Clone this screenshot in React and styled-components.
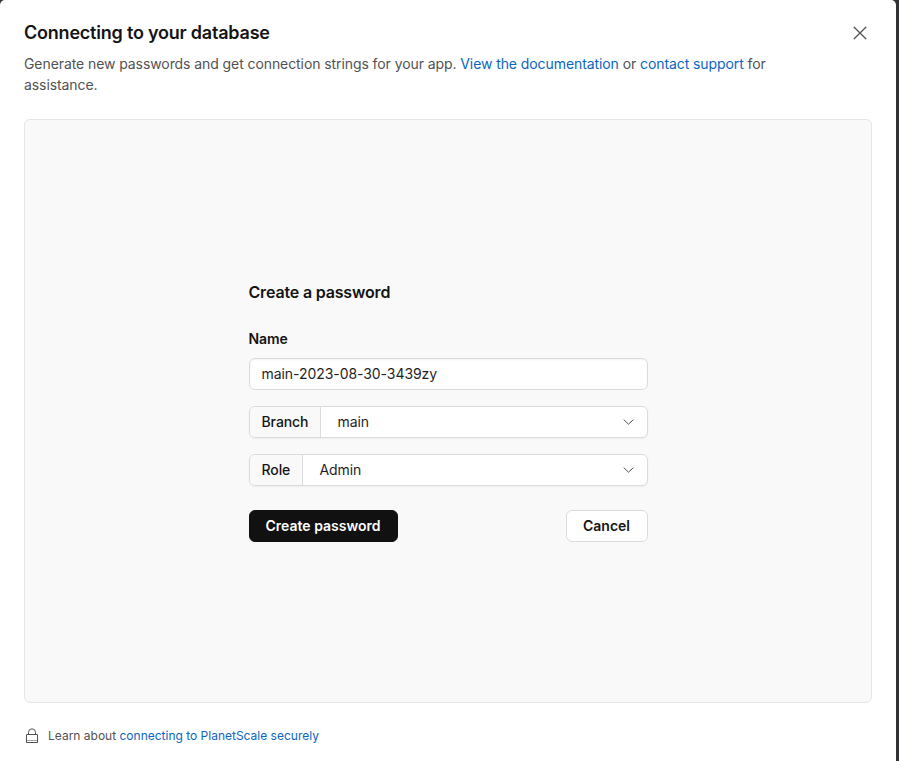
import React from "react";
import styled, { createGlobalStyle } from "styled-components";

const Global = createGlobalStyle`
  *, *::before, *::after { box-sizing: border-box; }
  body { margin: 0; background: #313235; overflow: hidden; }
  h1, h2, p { margin: 0; }
  body, button, input { font-family: Inter, "Liberation Sans", sans-serif; }
`;

const Dialog = styled.main`
  width: 896px;
  height: 761px;
  padding: 21px 24px 0;
  display: flex;
  flex-direction: column;
  background: #fff;
  border-radius: 5px 5px 0 0;
  color: #141414;
`;

const Header = styled.header`
  display: flex;
  justify-content: space-between;
  align-items: flex-start;
  height: 98px;
`;

const Intro = styled.div`
  width: 764px;
`;

const Title = styled.h1`
  font-size: 18px;
  line-height: 24px;
  font-weight: 600;
  letter-spacing: -0.21px;
`;

const Description = styled.p`
  margin-top: 8px;
  font-size: 14px;
  line-height: 21px;
  letter-spacing: -0.084px;
  color: #525252;
`;

const Link = styled.a`
  color: #0b65c2;
  text-decoration: none;
`;

const CloseButton = styled.button`
  display: flex;
  width: 24px;
  height: 24px;
  padding: 5px;
  border: 0;
  background: none;
  color: #525252;
`;

const Panel = styled.section`
  height: 584px;
  flex: none;
  display: flex;
  justify-content: center;
  padding-top: 161px;
  border: 1px solid #e6e6e6;
  border-radius: 6px;
  background: #f9f9f9;
`;

const Form = styled.form`
  width: 399px;
  display: flex;
  flex-direction: column;
`;

const FormTitle = styled.h2`
  font-size: 16px;
  line-height: 22px;
  font-weight: 600;
  letter-spacing: -0.17px;
`;

const Label = styled.label`
  margin: 26px 0 9px;
  font-size: 14px;
  line-height: 20px;
  font-weight: 600;
  letter-spacing: -0.08px;
`;

const TextInput = styled.input`
  width: 100%;
  height: 32px;
  padding: 0 12px 2px;
  border: 1px solid #dbdbdb;
  border-radius: 6px;
  outline: 0;
  background: #fff;
  box-shadow: inset 0 1px 2px rgba(0, 0, 0, 0.05);
  color: #1f1f1f;
  font-size: 14px;
  letter-spacing: -0.06px;
`;

const Select = styled.div`
  display: flex;
  height: 32px;
  margin-top: 16px;
  overflow: hidden;
  border: 1px solid #dbdbdb;
  border-radius: 6px;
  background: #fff;
  box-shadow: 0 1px 2px rgba(0, 0, 0, 0.05);
  font-size: 14px;
  line-height: 30px;
`;

const SelectLabel = styled.span`
  width: ${({ $width }) => $width}px;
  padding-left: 12px;
  border-right: 1px solid #dbdbdb;
  background: #f9f9f9;
  font-weight: 500;
  letter-spacing: -0.084px;
`;

const SelectValue = styled.span`
  flex: 1;
  display: flex;
  align-items: center;
  justify-content: space-between;
  padding: 0 12px 0 17px;
  color: #1f1f1f;
  letter-spacing: -0.084px;
`;

const Actions = styled.div`
  display: flex;
  justify-content: space-between;
  margin-top: 24px;
`;

const Button = styled.button`
  width: ${({ $width }) => $width}px;
  height: 32px;
  padding: 0 0 2px;
  border: 1px solid ${({ $primary }) => ($primary ? "#111" : "#dbdbdb")};
  border-radius: 6px;
  background: ${({ $primary }) => ($primary ? "#111" : "#fff")};
  color: ${({ $primary }) => ($primary ? "#fff" : "#141414")};
  font-size: 14px;
  font-weight: 600;
`;

const Footer = styled.footer`
  display: flex;
  align-items: center;
  gap: 8px;
  height: 20px;
  margin-top: 23px;
  color: #525252;
  font-size: 12px;
  line-height: 20px;
  letter-spacing: 0;
`;

const Chevron = () => (
  <svg width="14" height="14" viewBox="0 0 14 14" fill="none" stroke="#525252" strokeLinecap="round">
    <path d="M3 4.9 7.5 9.2 12 4.9" />
  </svg>
);

const Cross = () => (
  <svg width="14" height="14" viewBox="0 0 14 14" fill="none" stroke="currentColor" strokeWidth="1.3" strokeLinecap="round">
    <path d="m1.2 1.2 11.6 11.6M12.8 1.2 1.2 12.8" />
  </svg>
);

const Lock = () => (
  <svg width="16" height="16" viewBox="0 0 16 16" fill="none" stroke="#525252">
    <path d="M4.5 6.5V4.3a3.5 3.5 0 0 1 7 0v2.2" />
    <path d="M2.5 6.5h11v8h-11z" />
    <path d="M3 12.5h10" stroke="#a8a8a8" />
  </svg>
);

function SelectField({ label, labelWidth, value }) {
  return (
    <Select>
      <SelectLabel $width={labelWidth}>{label}</SelectLabel>
      <SelectValue>
        {value}
        <Chevron />
      </SelectValue>
    </Select>
  );
}

export default function App() {
  return (
    <>
      <Global />
      <Dialog>
        <Header>
          <Intro>
            <Title>Connecting to your database</Title>
            <Description>
              Generate new passwords and get connection strings for your app. <Link>View the documentation</Link> or{" "}
              <Link>contact support</Link> for assistance.
            </Description>
          </Intro>
          <CloseButton aria-label="Close">
            <Cross />
          </CloseButton>
        </Header>
        <Panel>
          <Form onSubmit={(event) => event.preventDefault()}>
            <FormTitle>Create a password</FormTitle>
            <Label htmlFor="name">Name</Label>
            <TextInput id="name" defaultValue="main-2023-08-30-3439zy" />
            <SelectField label="Branch" labelWidth={71} value="main" />
            <SelectField label="Role" labelWidth={53} value="Admin" />
            <Actions>
              <Button $primary $width={149}>Create password</Button>
              <Button type="button" $width={82}>Cancel</Button>
            </Actions>
          </Form>
        </Panel>
        <Footer>
          <Lock />
          <span>
            Learn about <Link>connecting to PlanetScale securely</Link>
          </span>
        </Footer>
      </Dialog>
    </>
  );
}
